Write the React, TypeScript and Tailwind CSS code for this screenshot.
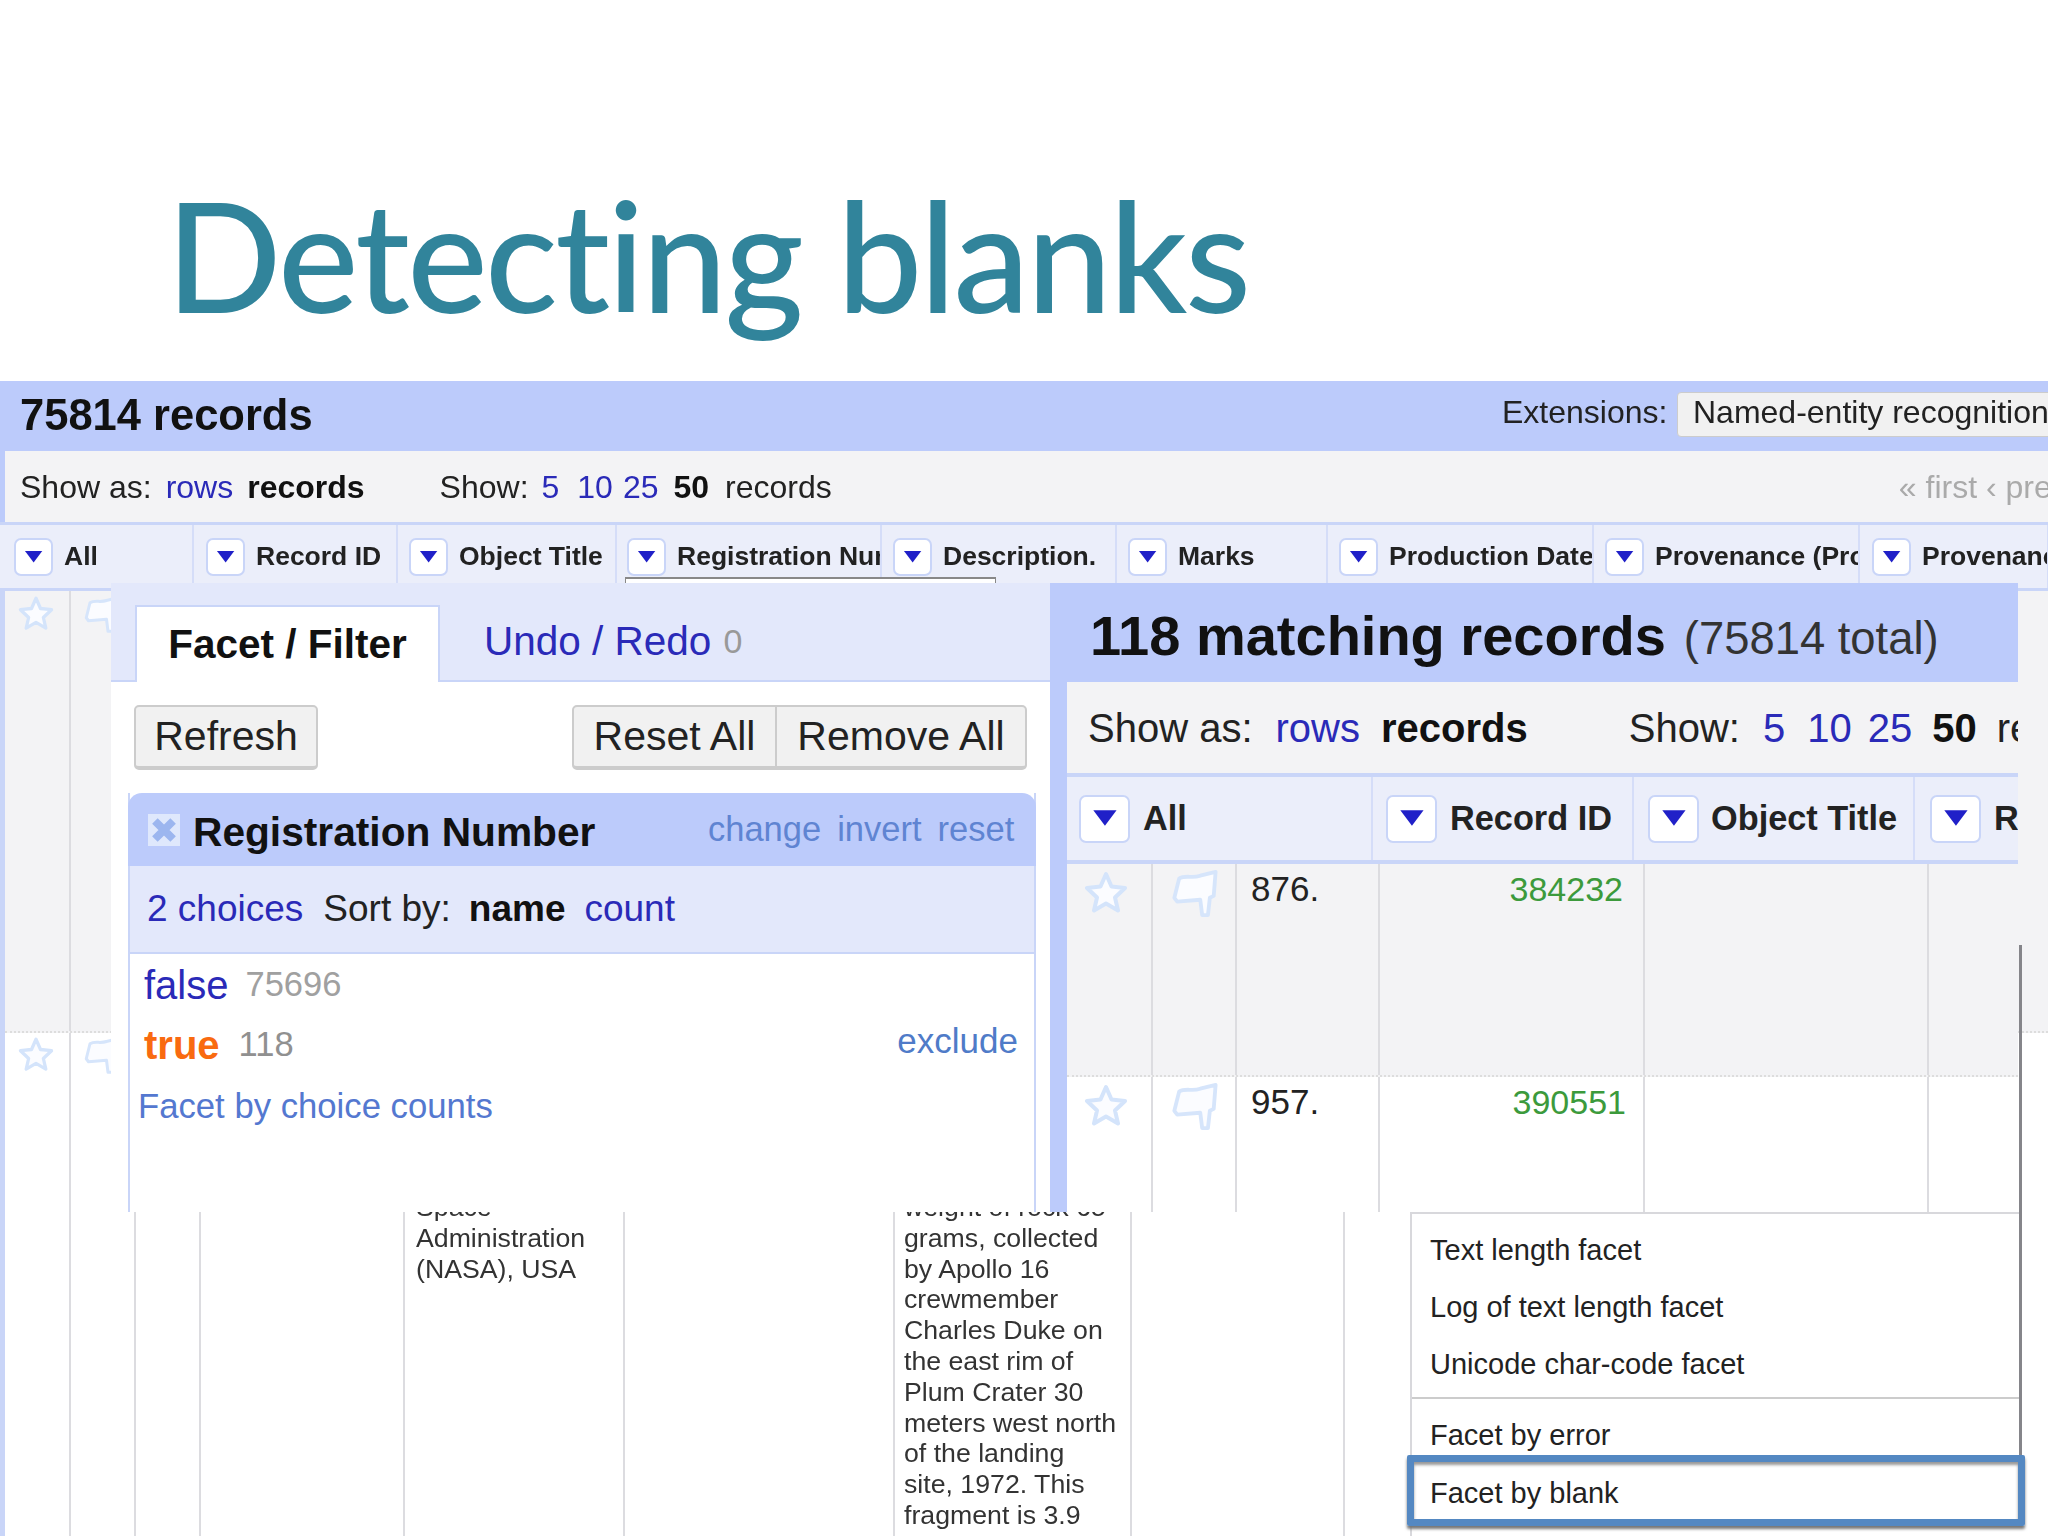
const headerCols = [
  { label: "All", width: "w-[189px]", pad: "pl-[9px]" },
  { label: "Record ID", width: "w-[204px]", pad: "pl-[12px]" },
  { label: "Object Title", width: "w-[219px]", pad: "pl-[11px]" },
  { label: "Registration Number", width: "w-[265px]", pad: "pl-[10px]" },
  { label: "Description.", width: "w-[235px]", pad: "pl-[11px]" },
  { label: "Marks", width: "w-[211px]", pad: "pl-[11px]" },
  { label: "Production Date", width: "w-[266px]", pad: "pl-[11px]" },
  { label: "Provenance (Production)", width: "w-[266px]", pad: "pl-[11px]" },
  { label: "Provenance", width: "w-[189px]", pad: "pl-[12px]" },
];

const descLines = [
  "weight of rock 65",
  "grams, collected",
  "by Apollo 16",
  "crewmember",
  "Charles Duke on",
  "the east rim of",
  "Plum Crater 30",
  "meters west north",
  "of the landing",
  "site, 1972. This",
  "fragment is 3.9",
];

const Arrow = ({ className }: { className: string }) => (
  <div
    className={`flex shrink-0 items-center justify-center rounded-[7px] border-2 border-[#c9d5f8] bg-white ${className}`}
  >
    <svg viewBox="0 0 20 14" className="w-[55%]">
      <path d="M1 1h18L10 13z" fill="#2020c8" />
    </svg>
  </div>
);

const Star = ({ className }: { className: string }) => (
  <svg viewBox="0 0 44 42" className={className}>
    <path
      d="M22 3l5.500 12.500 13.500 1.500-10 9.500 3 13-12-7-12 7 3-13-10-9.500 13.500-1.500z"
      fill="#fbfcff"
      stroke="#d4e4fb"
      strokeWidth="4"
      strokeLinejoin="round"
    />
  </svg>
);

const Flag = ({ className }: { className: string }) => (
  <svg viewBox="0 0 48 50" className={className}>
    <path
      d="M3 30L8 10c6-4 14 0 22-3l16-4-2 25-4 2-2 18h-6l-2-16-24 2z"
      fill="#fbfcff"
      stroke="#d6e5fb"
      strokeWidth="4"
      strokeLinejoin="round"
    />
  </svg>
);

const BaseRow = ({ className, star }: { className: string; star: string }) => (
  <div className={`flex ${className}`}>
    <div className={`w-[64px] ${star}`}>
      <Star className="ml-[13px] h-[38px] w-[36px]" />
    </div>
    <div className={`w-[65px] border-l-2 border-[#dcdce0] ${star}`}>
      <Flag className="ml-[13px] h-[40px] w-[36px]" />
    </div>
    <div className="w-[65px] border-l-2 border-[#dcdce0]" />
    <div className="w-[204px] border-l-2 border-[#dcdce0]" />
    <div className="w-[220px] border-l-2 border-[#dcdce0]" />
    <div className="w-[270px] border-l-2 border-[#dcdce0]" />
    <div className="w-[237px] border-l-2 border-[#dcdce0]" />
    <div className="w-[213px] border-l-2 border-[#dcdce0]" />
    <div className="w-[268px] border-l-2 border-[#dcdce0]" />
    <div className="w-[268px] border-l-2 border-[#dcdce0]" />
    <div className="flex-1 border-l-2 border-[#dcdce0]" />
  </div>
);

const ResultRow = ({
  num,
  id,
  idPad,
  className,
}: {
  num: string;
  id: string;
  idPad: string;
  className: string;
}) => (
  <div className={`flex ${className}`}>
    <div className="w-[84px] pl-[17px] pt-[7px]">
      <Star className="h-[42px] w-[44px]" />
    </div>
    <div className="w-[84px] border-l-2 border-[#dcdce0] pl-[18px] pt-[5px]">
      <Flag className="h-[48px] w-[47px]" />
    </div>
    <div className="w-[143px] border-l-2 border-[#dcdce0] pl-[14px] text-[35px] leading-[50px] text-[#222]">
      {num}
    </div>
    <div className={`w-[265px] border-l-2 border-[#dcdce0] text-right text-[34px] leading-[50px] text-[#3c9a3c] ${idPad}`}>
      {id}
    </div>
    <div className="w-[284px] border-l-2 border-[#dcdce0]" />
    <div className="flex-1 border-l-2 border-[#dcdce0]" />
  </div>
);

export default function App() {
  return (
    <div className="w-[2048px] h-[1536px] overflow-hidden bg-white font-['Liberation_Sans','Arial',sans-serif]">
      <div className="h-[381px] pl-[166px] pt-[159px]">
        <h1 className="whitespace-nowrap font-['Lato',sans-serif] text-[152px] font-medium leading-[190px] tracking-[-2.600px] text-[#31849b]">
          Detecting blanks
        </h1>
      </div>

      <div className="relative h-[1155px] overflow-hidden blur-[0.7px]">
        {/* page behind the overlays */}
        <div className="flex h-[70px] items-center bg-[#bccbfb] pl-[20px]">
          <div className="w-[1482px] shrink-0 text-[43.500px] font-bold text-[#111]">75814 records</div>
          <div className="mb-[8px] w-[175px] shrink-0 text-[32px] text-[#222]">Extensions:</div>
          <div className="mb-[4px] flex h-[45px] w-[380px] shrink-0 items-center rounded-[4px] border border-[#ccc] bg-[#f1f1f1] pb-[4px] pl-[15px] text-[32px] text-[#222] whitespace-nowrap">
            Named-entity recognition
          </div>
        </div>

        <div className="flex h-[71px] items-center border-l-[5px] border-[#bccbfb] bg-[#f3f3f5] pl-[15px] text-[32px] text-[#222] whitespace-nowrap">
          <span>Show as:</span>
          <span className="ml-[14px] text-[#2a2ab8]">rows</span>
          <span className="ml-[14px] font-bold text-[#111]">records</span>
          <span className="ml-[75px]">Show:</span>
          <span className="ml-[13px] text-[#2a2ab8]">5</span>
          <span className="ml-[18px] text-[#2a2ab8]">10</span>
          <span className="ml-[10px] text-[#2a2ab8]">25</span>
          <span className="ml-[15px] font-bold text-[#111]">50</span>
          <span className="ml-[16px]">records</span>
          <span className="ml-[1067px] w-[153px] overflow-hidden text-[#aaa]">« first ‹ previous</span>
        </div>

        <div className="flex h-[69px] items-center border-y-[3px] border-[#c9d5f8] bg-[#ebeefa] pl-[5px]">
          {headerCols.map((col) => (
            <div
              key={col.label}
              className={`flex h-full shrink-0 items-center gap-[11px] overflow-hidden border-r-2 border-[#d5ddf8] whitespace-nowrap ${col.width} ${col.pad}`}
            >
              <Arrow className="h-[38px] w-[39px]" />
              <span className="text-[26.500px] font-bold text-[#222]">{col.label}</span>
            </div>
          ))}
        </div>

        <div className="border-l-[5px] border-[#c9d5f8]">
          <BaseRow
            className="h-[442px] border-b-2 border-dotted border-[#ddd] bg-[#f3f3f5]"
            star="pt-[3px]"
          />
          <div className="relative">
            <BaseRow className="h-[503px]" star="pt-[2px]" />
            <div className="absolute left-[411px] top-[159px] text-[26.700px] leading-[30.800px] text-[#333]">
              <div>Space</div>
              <div>Administration</div>
              <div>(NASA), USA</div>
            </div>
            <div className="absolute left-[899px] top-[159px] text-[26.700px] leading-[30.800px] text-[#333] whitespace-nowrap">
              {descLines.map((line) => (
                <div key={line}>{line}</div>
              ))}
            </div>
          </div>
        </div>

        {/* white edge of a menu peeking out above the panels */}
        <div className="absolute left-[625px] top-[196px] h-[6px] w-[371px] border-x border-t-2 border-[#888] bg-white" />

        {/* facet panel */}
        <div className="absolute left-[111px] top-[202px] h-[629px] w-[939px] bg-white">
          <div className="flex h-[99px] items-end border-b-2 border-[#c9d5f8] bg-[#e3e8fb] pl-[24px]">
            <div className="-mb-[2px] flex h-[77px] w-[305px] items-center justify-center border-x-2 border-t-2 border-[#c9d5f8] bg-white text-[40.500px] font-bold text-[#111]">
              Facet / Filter
            </div>
            <div className="ml-[44px] flex h-[77px] items-center text-[40.500px] text-[#2a2ab8]">
              Undo / Redo
              <span className="ml-[12px] text-[34px] text-[#999]">0</span>
            </div>
          </div>

          <div className="flex items-center pl-[23px] pt-[23px] text-[41px] text-[#222]">
            <div className="flex h-[65px] w-[184px] items-center justify-center rounded-[5px] border-2 border-b-[4px] border-[#ccc] bg-[#f1f1f1]">
              Refresh
            </div>
            <div className="ml-[254px] flex h-[65px] w-[205px] items-center justify-center rounded-l-[5px] border-2 border-b-[4px] border-[#ccc] bg-[#f1f1f1]">
              Reset All
            </div>
            <div className="flex h-[65px] w-[250px] items-center justify-center rounded-r-[5px] border-y-2 border-r-2 border-b-[4px] border-[#ccc] bg-[#f1f1f1]">
              Remove All
            </div>
          </div>

          <div className="mx-[17px] mt-[23px] h-[419px] w-[908px] border-x-2 border-[#c9d5f8]">
            <div className="-mx-[2px] flex h-[73px] items-center rounded-t-[14px] bg-[#bccbfb] pl-[20px]">
              <div className="flex h-[32px] w-[32px] items-center justify-center bg-[#dfe8fc]">
                <svg viewBox="0 0 20 20" className="h-[26px] w-[26px]">
                  <path d="M3 3l14 14M17 3L3 17" stroke="#9cb6ef" strokeWidth="6" />
                </svg>
              </div>
              <span className="ml-[13px] w-[515px] pt-[6px] text-[40.700px] font-bold text-[#111]">
                Registration Number
              </span>
              <div className="flex gap-[16px] text-[34.500px] text-[#5f84d2] whitespace-nowrap">
                <span>change</span>
                <span>invert</span>
                <span>reset</span>
              </div>
            </div>
            <div className="flex h-[88px] items-center whitespace-nowrap border-b-2 border-[#c9d5f8] bg-[#e3e8fb] pl-[17px] text-[37px]">
              <span className="text-[#2a2ab8]">2 choices</span>
              <span className="ml-[20px] text-[#222]">Sort by:</span>
              <span className="ml-[18px] font-bold text-[#111]">name</span>
              <span className="ml-[19px] text-[#2a2ab8]">count</span>
            </div>
            <div className="flex h-[60px] items-center pl-[14px] pt-[2px]">
              <span className="text-[40px] text-[#2a2ab8]">false</span>
              <span className="ml-[17px] text-[34.500px] text-[#a0a0a0]">75696</span>
            </div>
            <div className="flex h-[60px] items-center pl-[14px] pr-[16px]">
              <span className="pt-[2px] text-[40px] font-bold text-[#f96a10]">true</span>
              <span className="ml-[19px] pt-[2px] text-[34.500px] text-[#909090]">118</span>
              <span className="ml-auto pb-[5px] text-[35px] text-[#4f7bc8]">exclude</span>
            </div>
            <div className="pl-[8px] pt-[6px] text-[34.700px] text-[#5478d0] whitespace-nowrap">
              Facet by choice counts
            </div>
          </div>
        </div>

        {/* matching records panel */}
        <div className="absolute left-[1050px] top-[202px] h-[629px] w-[968px] overflow-hidden border-l-[17px] border-[#bccbfb] bg-white">
          <div className="flex h-[99px] items-center whitespace-nowrap bg-[#bccbfb] pl-[23px] pt-[7px]">
            <span className="text-[56px] font-bold text-[#111]">118 matching records</span>
            <span className="ml-[18px] mt-[6px] text-[45.400px] text-[#333]">(75814 total)</span>
          </div>
          <div className="flex h-[91px] items-center whitespace-nowrap bg-[#f3f3f5] pl-[21px] text-[40px] text-[#222]">
            <span>Show as:</span>
            <span className="ml-[23px] text-[#2a2ab8]">rows</span>
            <span className="ml-[21px] font-bold text-[#111]">records</span>
            <span className="ml-[101px]">Show:</span>
            <span className="ml-[23px] text-[#2a2ab8]">5</span>
            <span className="ml-[22px] text-[#2a2ab8]">10</span>
            <span className="ml-[16px] text-[#2a2ab8]">25</span>
            <span className="ml-[20px] font-bold text-[#111]">50</span>
            <span className="ml-[20px]">records</span>
          </div>
          <div className="flex h-[91px] items-center border-y-[4px] border-[#c9d5f8] bg-[#ebeefa] whitespace-nowrap">
            <div className="flex h-full w-[306px] shrink-0 items-center gap-[13px] border-r-2 border-[#d5ddf8] pl-[12px]">
              <Arrow className="h-[48px] w-[51px]" />
              <span className="text-[34.300px] font-bold text-[#222]">All</span>
            </div>
            <div className="flex h-full w-[261px] shrink-0 items-center gap-[13px] border-r-2 border-[#d5ddf8] pl-[13px]">
              <Arrow className="h-[48px] w-[51px]" />
              <span className="text-[34.300px] font-bold text-[#222]">Record ID</span>
            </div>
            <div className="flex h-full w-[281px] shrink-0 items-center gap-[12px] border-r-2 border-[#d5ddf8] pl-[14px]">
              <Arrow className="h-[48px] w-[51px]" />
              <span className="text-[34.300px] font-bold text-[#222]">Object Title</span>
            </div>
            <div className="flex h-full shrink-0 items-center gap-[13px] pl-[15px]">
              <Arrow className="h-[48px] w-[51px]" />
              <span className="text-[34.300px] font-bold text-[#222]">Registration</span>
            </div>
          </div>
          <ResultRow
            num="876."
            id="384232"
            idPad="pr-[20px]"
            className="h-[213px] border-b-2 border-dotted border-[#ddd] bg-[#f3f3f5]"
          />
          <ResultRow num="957." id="390551" idPad="pr-[17px]" className="h-[140px]" />
        </div>

        {/* column menu */}
        <div className="absolute left-[1410px] top-[831px] h-[324px] w-[610px] border-l-2 border-t-2 border-[#d8d8dc] bg-white pt-[8px] text-[29px] text-[#222]">
          <div className="flex h-[57px] items-center pl-[18px]">Text length facet</div>
          <div className="flex h-[57px] items-center pl-[18px]">Log of text length facet</div>
          <div className="flex h-[57px] items-center pl-[18px]">Unicode char-code facet</div>
          <div className="mt-[4px] h-[2px] bg-[#ccc]" />
          <div className="mt-[8px] flex h-[57px] items-center pl-[18px]">Facet by error</div>
          <div className="mt-[2px] flex h-[56px] items-center pl-[18px]">Facet by blank</div>
        </div>

        {/* dark right edge of the cropped picture */}
        <div className="absolute left-[2019px] top-[564px] h-[510px] w-[3px] bg-[#85858a]" />

        {/* highlight round the last menu item */}
        <div className="absolute left-[1407px] top-[1074px] h-[71px] w-[618px] rounded-[2px] border-[7px] border-[#5488c2] shadow-[0_3px_3px_#777,inset_0_3px_3px_#999]" />
      </div>
    </div>
  );
}
